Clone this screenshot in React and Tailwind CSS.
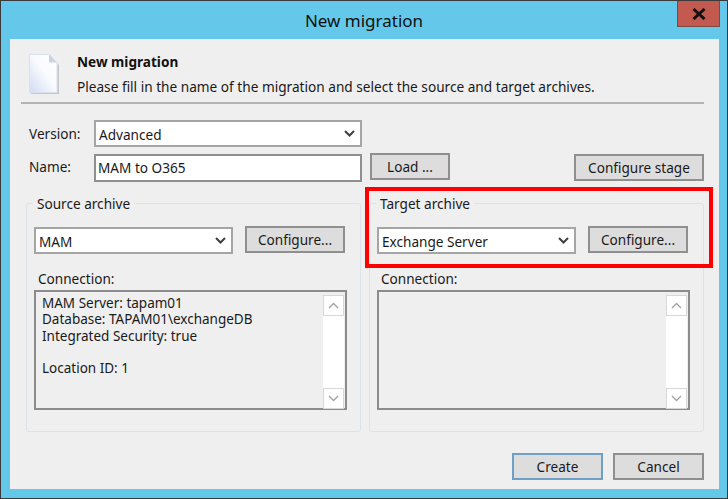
import React from "react";

const Chevron = () => (
  <svg width="11" height="7" viewBox="0 0 11 7" className="shrink-0">
    <path d="M1 1 L5.5 5.5 L10 1" fill="none" stroke="#404040" strokeWidth="2" />
  </svg>
);

const Select = ({ value, className }) => (
  <div className={"flex h-[27px] items-center justify-between border-2 border-[#a5a5a5] bg-white pl-[3px] pr-[5px] text-[13.6px] text-[#1a1a1a] " + className}>
    <span className="pt-[3px]">{value}</span>
    <Chevron />
  </div>
);

const Btn = ({ children, className, primary }) => (
  <div className={(primary ? "border-[#6f9fc4] " : "border-[#8f8f8f] ") + "flex h-[27px] items-center justify-center border-2 bg-[#dddddd] pt-[1px] text-[13.6px] text-[#1a1a1a] " + className}>
    {children}
  </div>
);

const ScrollArrow = ({ up }) => (
  <div className="flex h-[21px] items-center justify-center border border-[#d8d8d8] bg-white">
    <svg width="11" height="7" viewBox="0 0 11 7">
      <path d={up ? "M1 6 L5.5 1.5 L10 6" : "M1 1 L5.5 5.5 L10 1"} fill="none" stroke="#a0a0a0" strokeWidth="1.3" />
    </svg>
  </div>
);

const Group = ({ title, select, text }) => (
  <div className="relative h-[229px] w-[335px] rounded-[3px] border border-[#dce3e8] pl-[7px] pt-[22px]">
    <div className="absolute -top-[10px] left-[6px] bg-[#efefef] px-1 text-[13.6px] leading-[20px] text-[#1a1a1a]">{title}</div>
    <div className="flex items-start gap-[12px]">
      <Select value={select} className="mt-px w-[199px]" />
      <Btn className="w-[100px]">Configure...</Btn>
    </div>
    <div className="mt-[15px] pl-1 text-[13.6px] leading-[20px] text-[#1a1a1a]">Connection:</div>
    <div className="mt-[1px] flex h-[120px] w-[313px] justify-between border-2 border-[#8c8c8c] pl-[6px] pt-[3px]">
      <div className="whitespace-pre text-[13.5px] leading-[16.3px] text-[#1a1a1a]">{text}</div>
      <div className="mr-[1px] flex h-[114px] w-[21px] flex-col justify-between bg-white">
        <ScrollArrow up />
        <ScrollArrow />
      </div>
    </div>
  </div>
);

export default function App() {
  return (
    <div
      className="relative h-[499px] w-[728px] overflow-hidden border border-[#3a3a3a] bg-[#63c8ea]"
      style={{ fontFamily: '"Noto Sans", sans-serif' }}
    >
      <div className="relative flex h-[38px] items-center justify-center pt-[2px] text-[17px] text-[#111111]">
        New migration
        <div className="absolute right-[7px] top-0 flex h-[26px] w-[43px] items-center justify-center border border-t-0 border-[#7c4a44] bg-[#c35a4f]">
          <svg width="14" height="12" viewBox="0 0 14 12">
            <path d="M1.5 1 L12.5 11 M12.5 1 L1.5 11" stroke="#111" strokeWidth="3" />
          </svg>
        </div>
      </div>

      <div className="ml-[9px] h-[450px] w-[709px] bg-[#efefef] pl-[11px]">
        <div className="flex h-[65px] w-[683px] border-b-2 border-[#b3b3b3]">
          <div className="ml-[8px] mt-[15px]">
            <svg width="30" height="40" viewBox="0 0 30 40">
              <defs>
                <linearGradient id="pg" x1="1" y1="0" x2="0" y2="1">
                  <stop offset="0" stopColor="#ffffff" />
                  <stop offset="0.45" stopColor="#fafbfe" />
                  <stop offset="1" stopColor="#cfdcf2" />
                </linearGradient>
              </defs>
              <path d="M2 2 H21 L30 11 V40 H2 Z" fill="#c4c8cc" />
              <path d="M0.5 0.5 H20 L28 8.5 V38.5 H0.5 Z" fill="url(#pg)" stroke="#dbe1ec" strokeWidth="1" />
              <path d="M20 0.5 V8.5 H28 Z" fill="#c9d3e0" />
            </svg>
          </div>
          <div className="ml-[18px] mt-[13px]">
            <div className="text-[13.6px] font-bold leading-[20px] text-[#111111]">New migration</div>
            <div className="mt-[5px] text-[13.65px] leading-[20px] text-[#1a1a1a]">
              Please fill in the name of the migration and select the source and target archives.
            </div>
          </div>
        </div>

        <div className="mt-[16px] flex items-center">
          <div className="w-[73px] pl-[8px] pt-[1px] text-[13.6px] text-[#1a1a1a]">Version:</div>
          <Select value="Advanced" className="w-[268px]" />
        </div>

        <div className="mt-[7px] flex w-[683px] items-start">
          <div className="w-[73px] pl-[8px] pt-[3px] text-[13.6px] text-[#1a1a1a]">Name:</div>
          <div className="flex h-[28px] w-[268px] items-center border-2 border-[#8f8f8f] bg-white pl-[2px] text-[13.6px] text-[#1a1a1a]">MAM to O365</div>
          <Btn className="-mt-px ml-[8px] w-[80px]">Load ...</Btn>
          <Btn className="ml-auto w-[130px]">Configure stage</Btn>
        </div>

        <div className="mt-[21px] flex w-[683px] justify-between pl-[5px]">
          <Group
            title="Source archive"
            select="MAM"
            text={"MAM Server: tapam01\nDatabase: TAPAM01\\exchangeDB\nIntegrated Security: true\n\nLocation ID: 1"}
          />
          <Group title="Target archive" select="Exchange Server" text="" />
        </div>

        <div className="mt-[21px] flex w-[683px] justify-end gap-[10px]">
          <Btn primary className="w-[91px]">Create</Btn>
          <Btn className="w-[91px]">Cancel</Btn>
        </div>
      </div>

      <div className="pointer-events-none absolute left-[364px] top-[186px] h-[81px] w-[348px] border-[4px] border-[#ff0000]" />
    </div>
  );
}
